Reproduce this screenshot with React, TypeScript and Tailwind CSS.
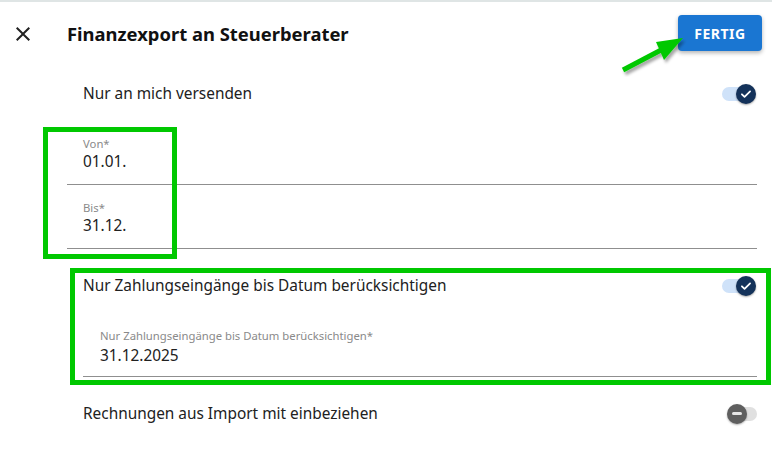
import React from "react";

function ToggleOn() {
  return (
    <div className="relative w-[34px] h-[20px] mr-[1px]">
      <div className="absolute left-0 top-[3px] w-[30px] h-[14px] rounded-full bg-[#cfe2f9]" />
      <div className="absolute right-0 top-0 w-[20px] h-[20px] rounded-full bg-[#14325a] shadow-[0_1px_2px_rgba(0,0,0,0.35)] flex items-center justify-center">
        <svg width="14" height="14" viewBox="0 0 24 24">
          <path d="M5 12.5l4.5 4.5L19 7.5" fill="none" stroke="#fff" strokeWidth="3" strokeLinecap="round" strokeLinejoin="round" />
        </svg>
      </div>
    </div>
  );
}

function ToggleOff() {
  return (
    <div className="relative w-[30px] h-[20px]">
      <div className="absolute right-0 top-[3px] w-[26px] h-[14px] rounded-full bg-[#e0e0e0]" />
      <div className="absolute left-0 top-0 w-[20px] h-[20px] rounded-full bg-[#5f5f5f] shadow-[0_1px_2px_rgba(0,0,0,0.3)] flex items-center justify-center">
        <div className="w-[10px] h-[2.5px] rounded-full bg-[#e6e6e6]" />
      </div>
    </div>
  );
}

export default function App() {
  return (
    <div
      className="relative w-[772px] h-[475px] bg-white overflow-hidden text-[#212121]"
      style={{ fontFamily: '"Noto Sans", "Open Sans", sans-serif' }}
    >
      <div className="h-[2px] bg-[#dfe5e5]" />
      {/* header */}
      <div className="h-[64px] flex items-center">
        <div className="w-[56px] pl-[11px] flex items-center">
          <svg width="24" height="24" viewBox="0 0 24 24">
            <path
              d="M19 6.41 17.59 5 12 10.59 6.41 5 5 6.41 10.59 12 5 17.59 6.41 19 12 13.41 17.59 19 19 17.59 13.41 12z"
              fill="#222"
            />
          </svg>
        </div>
        <div className="pl-[11px] text-[18.4px] font-bold text-[#111]">Finanzexport an Steuerberater</div>
        <button className="ml-auto mr-[10px] -mt-[2px] w-[84px] h-[36px] rounded-[4px] bg-[#1a76d2] text-white text-[14px] font-bold tracking-[0.5px] shadow-[0_2px_4px_rgba(0,0,0,0.3)]">
          FERTIG
        </button>
      </div>

      {/* content */}
      <div className="pl-[67px] pr-[15px] flex flex-col">
        <div className="h-[56px] flex items-center justify-between pl-[16px]">
          <span className="text-[15.4px]">Nur an mich versenden</span>
          <ToggleOn />
        </div>

        <div className="pl-[16px] pt-[15px] pb-[11px] border-b border-[#8f8f8f]">
          <div className="h-[14px] leading-[14px] text-[11.3px] text-[#8a8a8a]">Von*</div>
          <div className="h-[22px] leading-[22px] text-[15.4px]">01.01.</div>
        </div>
        <div className="pl-[16px] pt-[16px] pb-[11px] border-b border-[#8f8f8f]">
          <div className="h-[14px] leading-[14px] text-[11.3px] text-[#8a8a8a]">Bis*</div>
          <div className="h-[22px] leading-[22px] text-[15.4px]">31.12.</div>
        </div>

        <div className="h-[73px] flex items-center justify-between pl-[16px] pt-[1px]">
          <span className="text-[15.4px]">Nur Zahlungseingänge bis Datum berücksichtigen</span>
          <ToggleOn />
        </div>
        <div className="ml-[16px] pl-[17px] pt-[7px] pb-[10px] border-b border-[#8f8f8f]">
          <div className="h-[14px] leading-[14px] text-[11.3px] text-[#8a8a8a]">Nur Zahlungseingänge bis Datum berücksichtigen*</div>
          <div className="h-[23px] leading-[23px] pt-[1px] text-[15.4px]">31.12.2025</div>
        </div>

        <div className="h-[73px] flex items-center justify-between pl-[16px]">
          <span className="text-[15.4px]">Rechnungen aus Import mit einbeziehen</span>
          <ToggleOff />
        </div>
      </div>

      {/* annotations */}
      <div className="absolute left-[43px] top-[127px] w-[134px] h-[132px] border-[5px] border-[#00c800]" />
      <div className="absolute left-[70px] top-[268px] w-[701px] h-[117px] border-[5px] border-[#00c800]" />
      <svg className="absolute left-0 top-0 pointer-events-none" width="772" height="475" viewBox="0 0 772 475">
        <defs>
          <filter id="sh" x="-20%" y="-20%" width="140%" height="140%">
            <feDropShadow dx="2" dy="3" stdDeviation="1.5" floodColor="#000" floodOpacity="0.35" />
          </filter>
        </defs>
        <g filter="url(#sh)">
          <line x1="623" y1="70" x2="663" y2="49" stroke="#00c800" strokeWidth="5" />
          <polygon points="683,38 656,42 664,60" fill="#00c800" />
        </g>
      </svg>
    </div>
  );
}
